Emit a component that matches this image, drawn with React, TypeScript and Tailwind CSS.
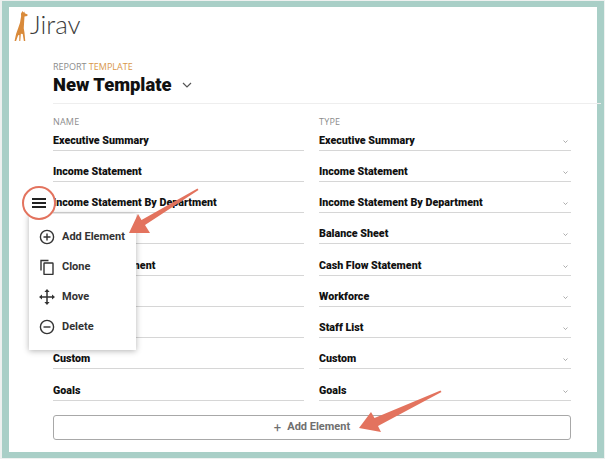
const rows = [
  ['Executive Summary', 'Executive Summary'],
  ['Income Statement', 'Income Statement'],
  ['Income Statement By Department', 'Income Statement By Department'],
  ['Balance Sheet', 'Balance Sheet'],
  ['Cash Flow Statement', 'Cash Flow Statement'],
  ['Workforce', 'Workforce'],
  ['Staff List', 'Staff List'],
  ['Custom', 'Custom'],
  ['Goals', 'Goals'],
];

function Chevron({ className }: { className: string }) {
  return (
    <svg viewBox="0 0 10 6" fill="none" stroke="currentColor" strokeWidth="1.2" className={className}>
      <path d="M1 1l4 4 4-4" />
    </svg>
  );
}

function Giraffe() {
  return (
    <svg viewBox="0 0 16 32" className="h-[30px] w-[15px]" fill="#d98a3a">
      <path d="M9 0l1 1.5L11 .5l.5 2 3 1.2-.3 1.6-3 .5-.4 6-.4 6.5.8 5 .8 8.7h-1.5l-1.2-7.5-2 -.2-.6 7.7H5.6l.1-6.5-1.3.3L2.2 32H.6l1.6-7.5 2.2-6 2-6 1.2-7L7.4 3z" />
    </svg>
  );
}

export default function App() {
  return (
    <div className="h-[459px] w-[605px] overflow-hidden bg-[#eef1f0] pt-px pr-px pb-px pl-[2px] font-['Roboto','Open_Sans',sans-serif]">
      <div className="relative h-[457px] w-[602px] border-x-[7px] border-t-[6px] border-b-[6px] border-[#a9cfc7] bg-white">
        <div className="flex h-[34px] items-end gap-[1px] pl-[5px]">
          <Giraffe />
          <span className="mb-[3px] text-[26px] leading-[27px] font-light text-[#3d3d3d] font-['Lato',sans-serif]">Jirav</span>
        </div>

        <div className="mt-[19px] ml-[44px] w-[518px]">
          <div className="text-[9px] leading-[13px] text-[#8c8c8c] font-['Open_Sans',sans-serif]">
            REPORT <span className="text-[#d9974a]">TEMPLATE</span>
          </div>
          <div className="flex h-[24px] items-center gap-[10px]">
            <h1 className="text-[18.4px] leading-[24px] font-black text-[#111]">New Template</h1>
            <Chevron className="h-[6px] w-[10px] text-[#555]" />
          </div>
          <div className="mt-[6px] h-px w-[548px] bg-[#eeeeee]" />

          <div className="mt-[11px] grid grid-cols-[251px_252px] gap-x-[15px] text-[9px] leading-[13px] tracking-[0.2px] text-[#8c8c8c] font-['Open_Sans',sans-serif]">
            <div>NAME</div>
            <div>TYPE</div>
          </div>

          <div className="flex flex-col">
            {rows.map(([name, type]) => (
              <div key={name} className="grid h-[31.25px] grid-cols-[251px_252px] gap-x-[15px] first:h-[22.5px]">
                <div className="flex items-end border-b border-[#d6d6d6] pb-[2px] text-[10.7px] leading-[14px] font-black text-[#111]">{name}</div>
                <div className="flex items-end justify-between border-b border-[#d6d6d6] pb-[2px] text-[10.7px] leading-[14px] font-black text-[#111]">
                  {type}
                  <Chevron className="mr-[3px] mb-[5px] h-[3px] w-[5px] text-[#777]" />
                </div>
              </div>
            ))}
          </div>

          <button className="mt-[14px] flex h-[25px] w-[518px] items-center justify-center gap-[6px] rounded-[3px] border border-[#a8a8a8] text-[11px] font-bold text-[#6f6f6f]">
            <span className="text-[13px] leading-none font-normal">+</span>
            Add Element
          </button>
        </div>

        {/* dropdown menu over the rows */}
        <div className="absolute top-[207px] left-[20px] flex h-[136px] w-[107px] flex-col gap-[10px] bg-white py-[13px] pl-[10px] text-[11px] font-bold text-[#333] shadow-[0_1px_6px_rgba(0,0,0,0.3)]">
          <div className="flex h-[20px] items-center gap-[7px]">
            <svg viewBox="0 0 16 16" className="h-[16px] w-[16px]" fill="none" stroke="#333" strokeWidth="1.4">
              <circle cx="8" cy="8" r="6.6" />
              <path d="M8 4.5v7M4.5 8h7" />
            </svg>
            Add Element
          </div>
          <div className="flex h-[20px] items-center gap-[7px]">
            <svg viewBox="0 0 16 16" className="h-[16px] w-[16px]" fill="none" stroke="#333" strokeWidth="1.4">
              <path d="M2 11.5V1.5h7.5" />
              <rect x="5" y="4" width="9" height="11.5" rx="0.5" />
            </svg>
            Clone
          </div>
          <div className="flex h-[20px] items-center gap-[7px]">
            <svg viewBox="0 0 16 16" className="h-[16px] w-[16px]" fill="#333" stroke="#333" strokeWidth="1.5">
              <path d="M8 2v12M2 8h12" fill="none" />
              <path d="M8 0l2.6 3H5.4zM8 16l2.6-3H5.4zM0 8l3 2.6V5.4zM16 8l-3 2.6V5.4z" stroke="none" />
            </svg>
            Move
          </div>
          <div className="flex h-[20px] items-center gap-[7px]">
            <svg viewBox="0 0 16 16" className="h-[16px] w-[16px]" fill="none" stroke="#333" strokeWidth="1.4">
              <circle cx="8" cy="8" r="6.6" />
              <path d="M4.5 8h7" />
            </svg>
            Delete
          </div>
        </div>

        {/* annotation: circled hamburger */}
        <div className="absolute top-[179px] left-[13px] flex h-[34px] w-[34px] flex-col items-center justify-center gap-[2.5px] rounded-full border-[2.5px] border-[#e3735e] bg-white">
          <span className="h-[1.5px] w-[14px] bg-[#222]" />
          <span className="h-[1.5px] w-[14px] bg-[#222]" />
          <span className="h-[1.5px] w-[14px] bg-[#222]" />
        </div>

        {/* annotation arrows, coordinates are page px minus the frame offset */}
        <svg className="pointer-events-none absolute top-[-6px] left-[-9px] h-[459px] w-[605px]" viewBox="0 0 605 459" fill="#e3735e">
          <path d="M129 232L138 213L141.5 219L197.5 187.5L198.5 189L145 224L150 232z" />
          <path d="M359 427L371 411L374.5 417L440.5 389.5L441.5 391L378 425L381 431z" />
        </svg>
      </div>
    </div>
  );
}
